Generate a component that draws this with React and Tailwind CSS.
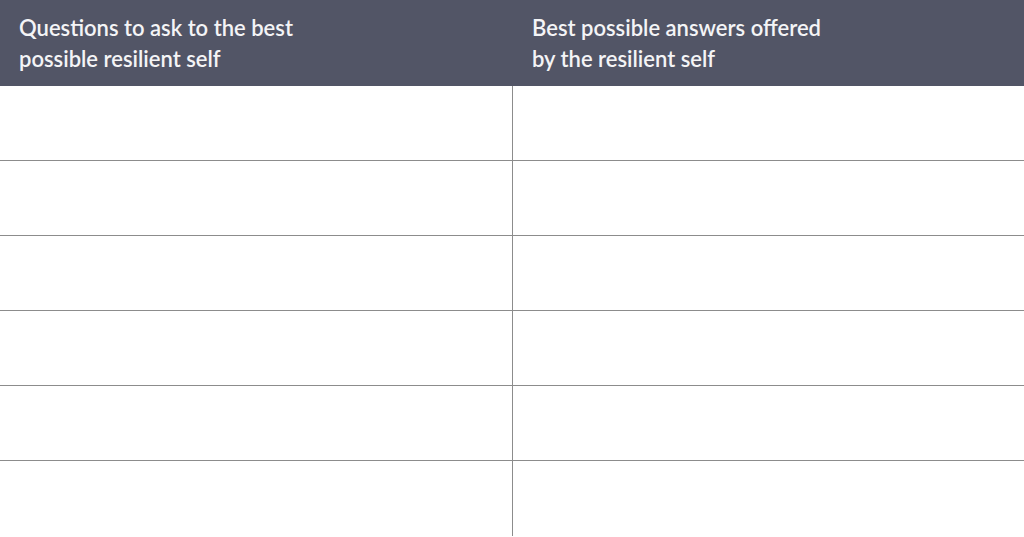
export default function App() {
  const rows = [0, 1, 2, 3, 4, 5];
  return (
    <div className="w-[1024px] h-[537px] bg-white overflow-hidden" style={{ fontFamily: "Lato, 'Open Sans', sans-serif" }}>
      <div className="grid grid-cols-[513px_511px] h-[86px] bg-[#525566] text-[#f4f4f6] text-[22px] leading-[31px] font-semibold">
        <div className="pl-[19px] pt-[12px]">Questions to ask to the best<br />possible resilient self</div>
        <div className="pl-[19px] pt-[12px]">Best possible answers offered<br />by the resilient self</div>
      </div>
      {rows.map((r) => (
        <div key={r} className={`grid grid-cols-[513px_511px] h-[75px] ${r < 5 ? "border-b border-[#8c8c8c]" : ""}`}>
          <div className="border-r border-[#8c8c8c]"></div>
          <div></div>
        </div>
      ))}
    </div>
  );
}
